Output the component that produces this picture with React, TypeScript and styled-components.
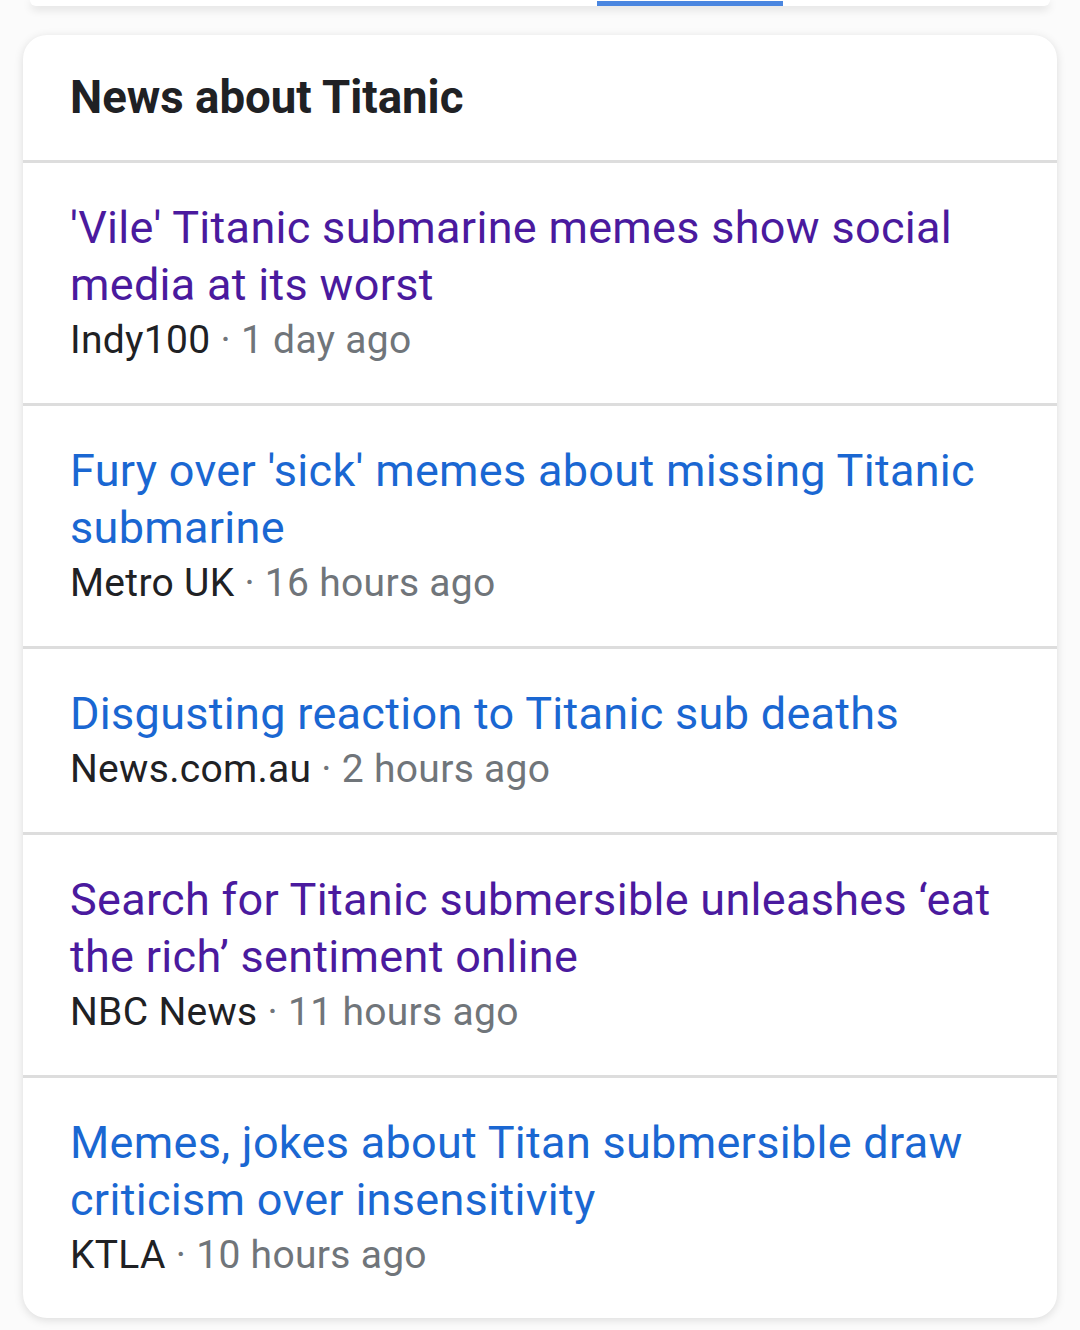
import styled, { createGlobalStyle } from 'styled-components';

const GlobalStyle = createGlobalStyle`
  html, body {
    margin: 0;
    padding: 0;
    background: #ffffff;
    font-family: Roboto, "Liberation Sans", Arial, sans-serif;
  }
`;

const COLORS = {
  TEXT: '#202124',
  META: '#70757a',
  LINK: '#1a67d2',
  VISITED: '#4a1a9e',
  DIVIDER: '#dddddd',
  TAB: '#4a86e0',
};

const Page = styled.div`
  display: flex;
  flex-direction: column;
  width: 1080px;
  height: 1330px;
  overflow: hidden;
  background: #fbfbfb;
`;

const TabsCard = styled.div`
  display: flex;
  align-items: flex-end;
  height: 6px;
  margin: 0 30px;
  padding-left: 567px;
  background: #ffffff;
  border-radius: 0 0 22px 22px;
  box-shadow: 0 3px 10px rgba(0, 0, 0, 0.14);
`;

const TabIndicator = styled.div`
  width: 186px;
  height: 5px;
  background: ${COLORS.TAB};
`;

const NewsCard = styled.section`
  display: flex;
  flex-direction: column;
  margin: 29px 23px 0;
  background: #ffffff;
  border-radius: 24px;
  box-shadow: 0 2px 10px rgba(0, 0, 0, 0.13);
  overflow: hidden;
`;

const CardHeader = styled.div`
  display: flex;
  align-items: center;
  height: 125px;
  padding: 0 47px;
  border-bottom: 3px solid ${COLORS.DIVIDER};
`;

const Heading = styled.h2`
  margin: 0;
  font-size: 45.6px;
  font-weight: 700;
  color: ${COLORS.TEXT};
`;

const Item = styled.a<{ $last?: boolean }>`
  display: flex;
  flex-direction: column;
  padding: 36px 47px 36px;
  border-bottom: ${(p) => (p.$last ? 'none' : `3px solid ${COLORS.DIVIDER}`)};
  text-decoration: none;
`;

const Title = styled.div<{ $visited?: boolean }>`
  font-size: 45px;
  line-height: 57px;
  letter-spacing: 0.3px;
  color: ${(p) => (p.$visited ? COLORS.VISITED : COLORS.LINK)};
`;

const Meta = styled.div`
  font-size: 39px;
  line-height: 54px;
  letter-spacing: 0.3px;
  color: ${COLORS.META};

  .meta__source {
    color: ${COLORS.TEXT};
  }
`;

interface NewsItem {
  title: string;
  source: string;
  time: string;
  visited: boolean;
}

const NEWS: NewsItem[] = [
  { title: "'Vile' Titanic submarine memes show social media at its worst", source: 'Indy100', time: '1 day ago', visited: true },
  { title: "Fury over 'sick' memes about missing Titanic submarine", source: 'Metro UK', time: '16 hours ago', visited: false },
  { title: 'Disgusting reaction to Titanic sub deaths', source: 'News.com.au', time: '2 hours ago', visited: false },
  { title: 'Search for Titanic submersible unleashes ‘eat the rich’ sentiment online', source: 'NBC News', time: '11 hours ago', visited: true },
  { title: 'Memes, jokes about Titan submersible draw criticism over insensitivity', source: 'KTLA', time: '10 hours ago', visited: false },
];

function App() {
  return (
    <Page>
      <GlobalStyle />
      <TabsCard>
        <TabIndicator />
      </TabsCard>
      <NewsCard>
        <CardHeader>
          <Heading>News about Titanic</Heading>
        </CardHeader>
        {NEWS.map((item, i) => (
          <Item key={item.title} $last={i === NEWS.length - 1}>
            <Title $visited={item.visited}>{item.title}</Title>
            <Meta>
              <span className='meta__source'>{item.source}</span> · {item.time}
            </Meta>
          </Item>
        ))}
      </NewsCard>
    </Page>
  );
}

export default App;
